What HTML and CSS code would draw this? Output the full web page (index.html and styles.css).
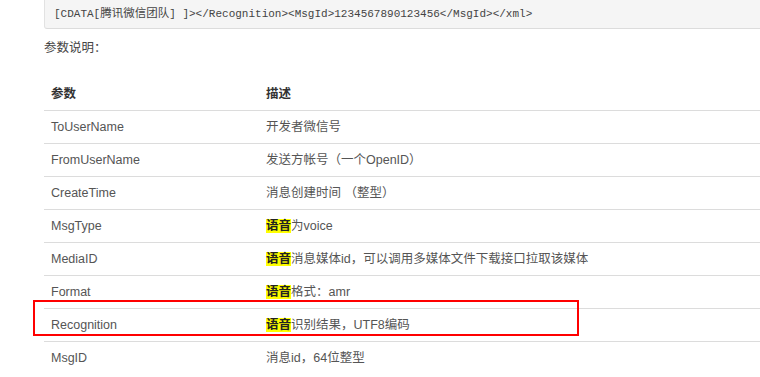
FILE: index.html
```html
<!DOCTYPE html>
<html lang="zh">
<head>
<meta charset="utf-8">
<link rel="stylesheet" href="styles.css">
</head>
<body>
<div class="page">
  <pre class="code">[CDATA[<span class="cjk">腾讯微信团队</span>] ]&gt;&lt;/Recognition&gt;&lt;MsgId&gt;1234567890123456&lt;/MsgId&gt;&lt;/xml&gt;</pre>
  <p class="label">参数说明：</p>
  <table class="params">
    <thead>
      <tr><th class="c1">参数</th><th>描述</th></tr>
    </thead>
    <tbody>
      <tr><td class="c1">ToUserName</td><td>开发者微信号</td></tr>
      <tr><td class="c1">FromUserName</td><td>发送方帐号（一个OpenID）</td></tr>
      <tr><td class="c1">CreateTime</td><td>消息创建时间 （整型）</td></tr>
      <tr><td class="c1">MsgType</td><td><b class="hl">语音</b>为voice</td></tr>
      <tr><td class="c1">MediaID</td><td><b class="hl">语音</b>消息媒体id，可以调用多媒体文件下载接口拉取该媒体</td></tr>
      <tr><td class="c1">Format</td><td><b class="hl">语音</b>格式：amr</td></tr>
      <tr><td class="c1">Recognition</td><td><b class="hl">语音</b>识别结果，UTF8编码</td></tr>
      <tr><td class="c1">MsgID</td><td>消息id，64位整型</td></tr>
    </tbody>
  </table>
  <div class="mark"></div>
</div>
</body>
</html>
```
FILE: styles.css
```css
html, body {
  margin: 0;
  padding: 0;
  overflow: hidden;
  background: #fff;
}
.page {
  position: relative;
  padding-left: 44px;
  font-family: "Liberation Sans", "Noto Sans CJK TC", sans-serif;
  font-size: 12.5px;
  color: #555;
}
.code {
  margin: 0;
  padding: 3px 9px 7px;
  height: 18px;
  line-height: 18px;
  background: #f5f5f5;
  border-left: 1px solid #e2e2e2;
  border-bottom: 1px solid #dcdcdc;
  border-bottom-left-radius: 3px;
  font-family: "Liberation Mono", "DejaVu Sans Mono", "Noto Sans CJK SC", monospace;
  font-size: 11px;
  color: #444;
  white-space: pre;
}
.code .cjk {
  font-family: "Noto Sans CJK SC", sans-serif;
  font-size: 11.5px;
}
.label {
  margin: 0;
  padding-top: 9px;
  height: 20px;
  line-height: 20px;
  color: #444;
}
.params {
  margin-top: 20px;
  width: 100%;
  border-collapse: collapse;
}
.params th, .params td {
  text-align: left;
  padding: 0 7px;
  height: 32px;
  line-height: 20px;
  border-bottom: 1px solid #dcdcdc;
  vertical-align: middle;
}
.params th {
  font-weight: bold;
  color: #333;
}
.params tbody tr:last-child td {
  border-bottom: none;
}
.params .c1 {
  width: 201px;
}
.hl {
  background: #ffff00;
  color: #222;
  font-weight: bold;
}
.mark {
  position: absolute;
  left: 33px;
  top: 300px;
  width: 542px;
  height: 32px;
  border: 2px solid #f00;
}
```
